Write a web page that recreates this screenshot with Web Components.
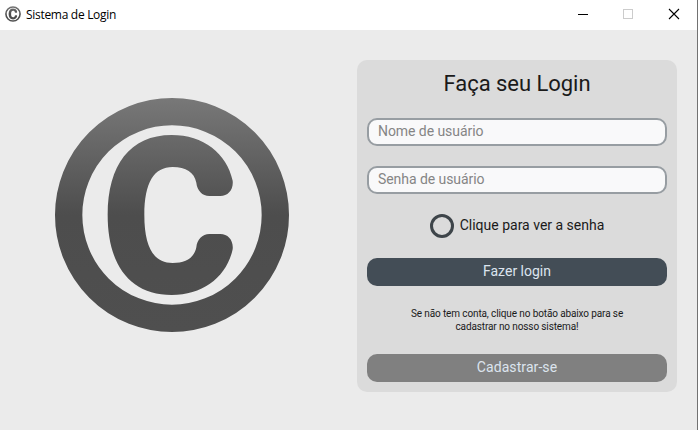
<!DOCTYPE html>
<html lang="pt-BR">
<head>
<meta charset="utf-8">
<title>Sistema de Login</title>
<style>
html,body{margin:0;height:100%;overflow:hidden}
body{font-family:Roboto,"Liberation Sans",sans-serif;background:#ebebeb}
</style>
</head>
<body>
<login-window></login-window>
<script>
const define = (name, html) => customElements.define(name, class extends HTMLElement {
  constructor(){
    super();
    this.attachShadow({mode:'open'}).innerHTML = html;
  }
});

define('copyright-logo', `
<style>:host{display:block}svg{display:block;width:100%;height:100%}circle{stroke-width:var(--ring,82)}</style>
<svg viewBox="45 39 702 702">
  <defs><linearGradient id="g" gradientUnits="userSpaceOnUse" x1="0" y1="39" x2="0" y2="741">
    <stop offset="0" stop-color="#787878"/><stop offset=".5" stop-color="#4d4d4d"/><stop offset="1" stop-color="#4f4f4f"/>
  </linearGradient></defs>
  <circle cx="396" cy="390" r="310" fill="none" stroke="url(#g)"/>
  <path fill="url(#g)" d="M395 150C490 150 560 205 578 287C581 314 564 333 541 333H508C487 333 471 316 469 293C463 262 438 246 398 246C342 246 313 292 313 390C313 488 342 534 398 534C438 534 463 518 469 487C471 464 487 447 508 447H541C564 447 581 466 578 493C560 575 490 630 395 630C270 630 203 540 203 390C203 240 270 150 395 150Z"/>
</svg>`);

define('title-bar', `
<style>
:host{display:flex;align-items:center;height:30px;box-sizing:border-box;background:#fff;padding-left:5px;color:#000;
 font:12px/16px "Open Sans","Noto Sans",sans-serif}
copyright-logo{width:16px;height:16px;margin:0 5px 2px 0;--ring:68}
.t{flex:1;letter-spacing:-.3px}
svg{display:block;width:46px;height:30px;fill:none;shape-rendering:crispEdges}
svg:last-child{shape-rendering:auto}
</style>
<copyright-logo></copyright-logo><span class="t"><slot></slot></span>
<svg viewBox="0 0 46 30"><path d="M19 14.500h10" stroke="#000"/></svg>
<svg viewBox="0 0 46 30"><path d="M18.500 9.500h9v9h-9z" stroke="#ccc"/></svg>
<svg viewBox="0 0 46 30"><path d="M18 9l10 10M28 9l-10 10" stroke="#000" stroke-width="1.1"/></svg>`);

define('text-field', `
<style>
:host{display:block;box-sizing:border-box;height:28px;border:2px solid #979da2;border-radius:10px;background:#f9f9fa;
 padding-left:9px;font-size:14px;letter-spacing:-.06px;line-height:23px;color:#858585;white-space:nowrap}
</style><slot></slot>`);

define('push-button', `
<style>
:host{display:block;height:28px;border-radius:10px;background:var(--fill);color:#dce4ee;text-align:center;font-size:14px;line-height:27px}
</style><slot></slot>`);

define('radio-option', `
<style>
:host{display:flex;justify-content:center;height:24px;gap:6px;font-size:14px;line-height:23px;color:#1a1a1a}
i{box-sizing:border-box;width:24px;height:24px;border:3px solid #3e454a;border-radius:50%}
</style><i></i><span><slot></slot></span>`);

define('login-card', `
<style>
:host{display:flex;flex-direction:column;box-sizing:border-box;width:320px;height:332px;background:#dbdbdb;border-radius:10px;padding:10px;color:#1a1a1a}
h1{margin:0;font-weight:400;font-size:22px;letter-spacing:-.04px;line-height:28px;height:28px;text-align:center}
text-field{margin-top:20px}
radio-option{margin-top:20px}
.main{--fill:#434d56;margin-top:20px}
p{margin:21px 0 0;height:27px;font-size:10px;letter-spacing:-.12px;line-height:13px;text-align:center}
.alt{--fill:#808080;margin-top:20px;letter-spacing:.08px}
</style>
<h1>Faça seu Login</h1>
<text-field>Nome de usuário</text-field>
<text-field>Senha de usuário</text-field>
<radio-option>Clique para ver a senha</radio-option>
<push-button class="main">Fazer login</push-button>
<p>Se não tem conta, clique no botão abaixo para se<br>cadastrar no nosso sistema!</p>
<push-button class="alt">Cadastrar-se</push-button>`);

define('login-window', `
<style>
:host{display:flex;flex-direction:column;box-sizing:border-box;width:698px;height:430px;border-right:1px solid #727272;background:#ebebeb}
main{display:flex;align-items:flex-start;padding:30px 20px 0 55px}
copyright-logo.big{width:234px;height:234px;margin:38px 68px 0 0}
</style>
<title-bar>Sistema de Login</title-bar>
<main><copyright-logo class="big"></copyright-logo><login-card></login-card></main>`);
</script>
</body>
</html>
